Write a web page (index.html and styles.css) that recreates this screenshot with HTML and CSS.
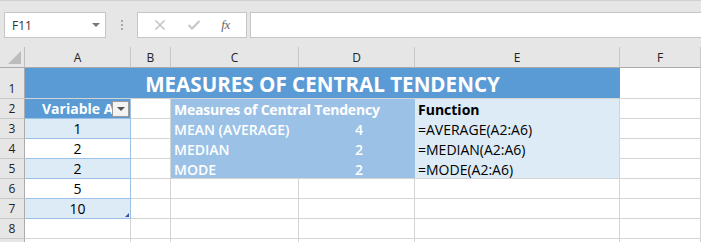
FILE: index.html
```html
<!DOCTYPE html>
<html>
<head>
<meta charset="utf-8">
<link rel="stylesheet" href="styles.css">
</head>
<body>
<div class="app">
  <div class="toolbar">
    <div class="namebox"><span class="nb-text">F11</span><span class="nb-arrow"></span></div>
    <div class="grip"><i></i><i></i><i></i></div>
    <div class="fbtns">
      <svg class="ico" width="12" height="12" viewBox="0 0 12 12"><path d="M1.5 1.5 L10.5 10.5 M10.5 1.5 L1.5 10.5" stroke="#c4c4c4" stroke-width="1.6" fill="none"/></svg>
      <svg class="ico" width="14" height="12" viewBox="0 0 14 12"><path d="M1.5 6 L5 9.5 L12.5 2" stroke="#c4c4c4" stroke-width="2" fill="none"/></svg>
      <span class="fx">fx</span>
    </div>
    <div class="finput"></div>
  </div>
  <div class="sheet">
    <div class="ch corner"><span class="tri"></span></div>
    <div class="ch">A</div><div class="ch">B</div><div class="ch">C</div><div class="ch">D</div><div class="ch">E</div><div class="ch">F</div>

    <div class="rh r1">1</div>
    <div class="title">MEASURES OF CENTRAL TENDENCY</div>
    <div class="c r1"></div>

    <div class="rh">2</div>
    <div class="c tA thead">Variable A<span class="filter"><span class="ftri"></span></span></div>
    <div class="c"></div>
    <div class="mblock">
      <div class="mrow"><span class="mb">Measures of Central Tendency</span></div>
      <div class="mrow"><span class="ml">MEAN (AVERAGE)</span><span class="mv">4</span></div>
      <div class="mrow"><span class="ml">MEDIAN</span><span class="mv">2</span></div>
      <div class="mrow"><span class="ml">MODE</span><span class="mv">2</span></div>
    </div>
    <div class="fblock">
      <div class="frow bold">Function</div>
      <div class="frow">=AVERAGE(A2:A6)</div>
      <div class="frow">=MEDIAN(A2:A6)</div>
      <div class="frow">=MODE(A2:A6)</div>
    </div>
    <div class="c"></div>

    <div class="rh">3</div>
    <div class="c tA band">1</div>
    <div class="c"></div>
    <div class="c"></div>

    <div class="rh">4</div>
    <div class="c tA">2</div>
    <div class="c"></div>
    <div class="c"></div>

    <div class="rh">5</div>
    <div class="c tA band">2</div>
    <div class="c"></div>
    <div class="c"></div>

    <div class="rh">6</div>
    <div class="c tA">5</div>
    <div class="c"></div>
    <div class="c"></div><div class="c"></div><div class="c"></div><div class="c"></div>

    <div class="rh">7</div>
    <div class="c tA band">10<span class="handle"></span></div>
    <div class="c"></div>
    <div class="c"></div><div class="c"></div><div class="c"></div><div class="c"></div>

    <div class="rh">8</div>
    <div class="c"></div><div class="c"></div><div class="c"></div><div class="c"></div><div class="c"></div><div class="c"></div>

    <div class="rh"></div>
    <div class="c"></div><div class="c"></div><div class="c"></div><div class="c"></div><div class="c"></div><div class="c"></div>
  </div>
</div>
</body>
</html>
```
FILE: styles.css
```css
* { box-sizing: border-box; }
html, body { margin: 0; padding: 0; background: #fff; overflow: hidden; }
body { width: 701px; height: 242px; font-family: "Open Sans", "Noto Sans", sans-serif; }
.app { height: 242px; overflow: hidden; }

.toolbar {
  height: 47px;
  background: #e6e6e6;
  border-top: 1px solid #d0d0d0;
  display: flex;
  align-items: flex-start;
  padding-top: 11px;
  padding-left: 4px;
}
.namebox {
  width: 102px; height: 26px;
  background: #fff;
  border: 1px solid #c6c6c6;
  display: flex; align-items: center; justify-content: space-between;
  padding: 0 5px 0 7px;
}
.nb-text { font-size: 12px; color: #333; }
.nb-arrow { width: 0; height: 0; border-left: 4px solid transparent; border-right: 4px solid transparent; border-top: 4px solid #777; }
.grip { width: 31px; height: 26px; display: flex; flex-direction: column; align-items: center; justify-content: center; gap: 2px; }
.grip i { display: block; width: 2px; height: 2px; background: #a8a8a8; }
.fbtns {
  width: 110px; height: 26px;
  background: #fff; border: 1px solid #c6c6c6;
  display: flex; align-items: center; justify-content: space-around;
  padding: 0 6px;
}
.fx { font-family: "Liberation Serif", serif; font-style: italic; font-size: 13px; color: #666; letter-spacing: -0.5px; }
.finput { flex: 1; height: 26px; margin-left: 3px; background: #fff; border: 1px solid #c6c6c6; border-right: none; }

.sheet {
  display: grid;
  grid-template-columns: 25px 106px 40px 128px 116px 205px 81px;
  grid-template-rows: 21px 31px repeat(8, 20px);
}
.ch {
  background: #e6e6e6;
  border-bottom: 1px solid #ababab;
  border-right: 1px solid #c8c8c8;
  font-size: 12px; color: #222;
  display: flex; align-items: center; justify-content: center;
  padding-top: 1px;
}
.corner { border-right: 1px solid #c0c0c0; position: relative; }
.tri { position: absolute; right: 3px; bottom: 3px; width: 0; height: 0; border-left: 13px solid transparent; border-bottom: 13px solid #bcbcbc; }
.rh {
  background: #e6e6e6;
  border-right: 1px solid #ababab;
  border-bottom: 1px solid #c8c8c8;
  font-size: 12px; color: #222;
  display: flex; align-items: flex-end; justify-content: center;
  padding-bottom: 1px;
}
.c {
  border-right: 1px solid #d4d4d4;
  border-bottom: 1px solid #d4d4d4;
  font-size: 14px; color: #000;
  display: flex; align-items: flex-end; justify-content: center;
  padding-bottom: 0;
  line-height: 19px;
}
.title {
  grid-column: 2 / span 5;
  background: #5b9bd5;
  color: #fff; font-weight: 700; font-size: 20.6px;
  display: flex; align-items: center; justify-content: center;
  border-bottom: 1px solid #d4d4d4;
  padding-top: 2px;
}
.tA { border-right: 1px solid #9bc2e6; border-bottom: 1px solid #9bc2e6; position: relative; }
.band { background: #ddebf7; }
.thead { background: #5b9bd5; color: #fff; font-weight: 700; justify-content: flex-start; padding-left: 17px; overflow: hidden; }
.filter {
  position: absolute; right: 1px; top: 2px;
  width: 17px; height: 16px;
  background: #f3f3f3; border: 1px solid #9a9a9a;
  display: flex; align-items: center; justify-content: center;
}
.ftri { width: 0; height: 0; border-left: 4px solid transparent; border-right: 4px solid transparent; border-top: 4px solid #555; }
.handle { position: absolute; right: 1px; bottom: 1px; width: 0; height: 0; border-left: 4px solid transparent; border-bottom: 4px solid #3a53a4; }

.mblock {
  grid-column: 4 / span 2; grid-row: 3 / span 4;
  background: #9bc2e6;
  display: grid; grid-template-rows: 20px 20px 20px 20px;
  border-bottom: 1px solid #d4d4d4;
}
.mrow { display: flex; align-items: flex-end; color: #fff; font-size: 14px; line-height: 19px; }
.mb { font-weight: 700; padding-left: 3px; letter-spacing: -0.2px; }
.ml { width: 128px; padding-left: 3px; font-weight: 600; }
.mv { width: 116px; text-align: center; padding-left: 4px; font-weight: 600; }
.fblock {
  grid-column: 6; grid-row: 3 / span 4;
  background: #ddebf7;
  display: grid; grid-template-rows: 20px 20px 20px 20px;
  border-right: 1px solid #d4d4d4;
  border-bottom: 1px solid #d4d4d4;
}
.frow { display: flex; align-items: flex-end; font-size: 14px; line-height: 19px; padding-left: 3px; color: #000; }
.bold { font-weight: 700; }
```
